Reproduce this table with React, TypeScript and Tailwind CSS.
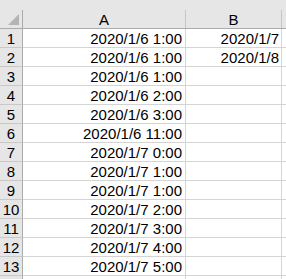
const rows: [string, string][] = [
  ['2020/1/6 1:00', '2020/1/7'],
  ['2020/1/6 1:00', '2020/1/8'],
  ['2020/1/6 1:00', ''],
  ['2020/1/6 2:00', ''],
  ['2020/1/6 3:00', ''],
  ['2020/1/6 11:00', ''],
  ['2020/1/7 0:00', ''],
  ['2020/1/7 1:00', ''],
  ['2020/1/7 1:00', ''],
  ['2020/1/7 2:00', ''],
  ['2020/1/7 3:00', ''],
  ['2020/1/7 4:00', ''],
  ['2020/1/7 5:00', ''],
];

export default function App() {
  return (
    <div className="w-[286px] h-[279px] overflow-hidden bg-white text-black font-['Liberation_Sans',Arial,sans-serif] text-[15px] leading-none">
      {/* top strip */}
      <div className="h-[10px] bg-[#e6e6e6]" />

      {/* column headers */}
      <div className="flex h-[19px] bg-[#e6e6e6] border-b border-[#ababab]">
        <div className="w-[23px] shrink-0 border-r border-[#ababab] relative">
          <svg width="12" height="12" viewBox="0 0 12 12" className="absolute left-[7px] top-[4px]">
            <polygon points="12,0 12,11 1,11" fill="#b4b4b4" />
          </svg>
        </div>
        <div className="w-[163px] shrink-0 border-r border-[#c6c6c6] flex items-end justify-center pb-[1px]">A</div>
        <div className="w-[96px] shrink-0 border-r border-[#c6c6c6] flex items-end justify-center pb-[1px]">B</div>
        <div className="flex-1" />
      </div>

      {rows.map(([a, b], i) => (
        <div key={i} className="flex h-[19px]">
          <div className="w-[23px] shrink-0 bg-[#e6e6e6] border-r border-b border-r-[#ababab] border-b-[#c8c8c8] flex items-end justify-center pb-[1px]">
            {i + 1}
          </div>
          <div className="w-[163px] shrink-0 border-r border-b border-[#d4d4d4] flex items-end justify-end pr-[3px] pb-[1px]">
            {a}
          </div>
          <div className="w-[96px] shrink-0 border-r border-b border-[#d4d4d4] flex items-end justify-end pr-[2px] pb-[1px]">
            {b}
          </div>
          <div className="flex-1 border-b border-[#d4d4d4]" />
        </div>
      ))}

      <div className="flex h-[19px]">
        <div className="w-[23px] shrink-0 bg-[#e6e6e6] border-r border-[#ababab]" />
        <div className="w-[163px] shrink-0 border-r border-[#d4d4d4]" />
        <div className="w-[96px] shrink-0 border-r border-[#d4d4d4]" />
      </div>
    </div>
  );
}
